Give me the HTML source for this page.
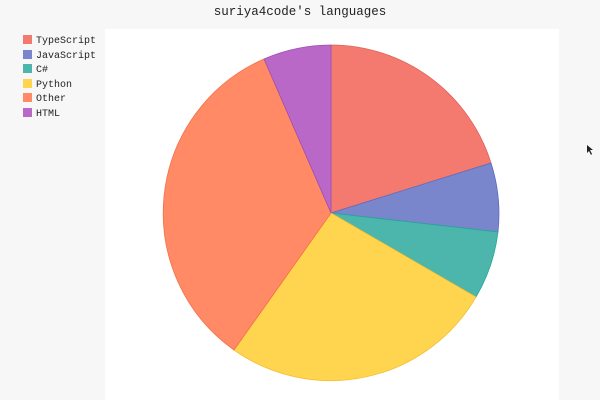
<!DOCTYPE html>
<html><head><style>
html,body{margin:0;padding:0;}
body{width:600px;height:400px;background:#f7f7f7;position:relative;overflow:hidden;font-family:"Liberation Mono",monospace;}
.t{position:absolute;top:5px;left:0;width:600px;text-align:center;font-size:12.5px;color:#222;}
.plot{position:absolute;left:105px;top:29px;width:454px;height:371px;background:#fff;}
.lg{position:absolute;left:23px;font-size:10px;color:#222;line-height:12px;}
.lg i{display:inline-block;width:9px;height:9px;vertical-align:-1px;margin-right:4px;}
</style></head><body>
<div class="t">suriya4code's languages</div>
<div class="plot"></div>
<div class="lg" style="top:35px"><i style="background:#f47a6f"></i>TypeScript</div>
<div class="lg" style="top:49.5px"><i style="background:#7986cb"></i>JavaScript</div>
<div class="lg" style="top:64px"><i style="background:#4db6ac"></i>C#</div>
<div class="lg" style="top:78.5px"><i style="background:#ffd54f"></i>Python</div>
<div class="lg" style="top:93px"><i style="background:#ff8a65"></i>Other</div>
<div class="lg" style="top:107.5px"><i style="background:#ba68c8"></i>HTML</div>
<svg width="600" height="400" style="position:absolute;left:0;top:0">
<g stroke-width="0.8">
<path d="M331 213 L331 45 A168 168 0 0 1 491 163 Z" fill="#f47a6f" stroke="#e06058"/>
<path d="M331 213 L491 163 A168 168 0 0 1 498 232 Z" fill="#7986cb" stroke="#5c6bc0"/>
<path d="M331 213 L498 232 A168 168 0 0 1 476 297 Z" fill="#4db6ac" stroke="#26a69a"/>
<path d="M331 213 L476 297 A168 168 0 0 1 234 350 Z" fill="#ffd54f" stroke="#f5c030"/>
<path d="M331 213 L234 350 A168 168 0 0 1 264 59 Z" fill="#ff8a65" stroke="#f4704a"/>
<path d="M331 213 L264 59 A168 168 0 0 1 331 45 Z" fill="#ba68c8" stroke="#9c4fb0"/>
</g>
<path d="M587 145 L587 153 L589 151 L591 155 L592 154 L590 150 L593 150 Z" fill="#222"/>
</svg>
</body></html>
